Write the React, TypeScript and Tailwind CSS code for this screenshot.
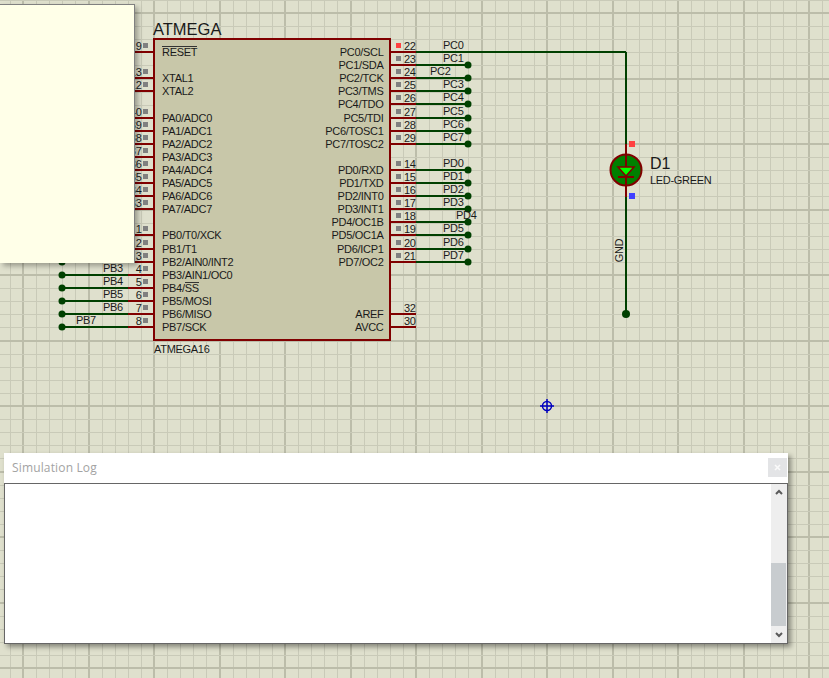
import React from 'react';

const WIDTH = 829;
const HEIGHT = 678;
const RED = '#800000';
const WIRE = '#004000';
const INK = '#1a1a1a';

const rowY = (n: number) => Math.round(52 + 13.1 * n);

// grid on the canvas: a minor line every 13.1px, a major one every fifth
const gridLines = (offset: number, max: number) => {
  const lines: { p: number; major: boolean }[] = [];
  for (let i = 0; ; i++) {
    const p = offset + 13.1 * i;
    if (p > max) break;
    lines.push({ p: Math.round(p), major: i % 5 === 0 });
  }
  return lines;
};

const leftPins = [
  { row: 0, name: 'RESET', num: '9' },
  { row: 2, name: 'XTAL1', num: '13' },
  { row: 3, name: 'XTAL2', num: '12' },
  { row: 5, name: 'PA0/ADC0', num: '40' },
  { row: 6, name: 'PA1/ADC1', num: '39' },
  { row: 7, name: 'PA2/ADC2', num: '38' },
  { row: 8, name: 'PA3/ADC3', num: '37' },
  { row: 9, name: 'PA4/ADC4', num: '36' },
  { row: 10, name: 'PA5/ADC5', num: '35' },
  { row: 11, name: 'PA6/ADC6', num: '34' },
  { row: 12, name: 'PA7/ADC7', num: '33' },
  { row: 14, name: 'PB0/T0/XCK', num: '1' },
  { row: 15, name: 'PB1/T1', num: '2' },
  { row: 16, name: 'PB2/AIN0/INT2', num: '3', wire: '' },
  { row: 17, name: 'PB3/AIN1/OC0', num: '4', wire: 'PB3', lx: 103 },
  { row: 18, name: 'PB4/SS', num: '5', wire: 'PB4', lx: 103 },
  { row: 19, name: 'PB5/MOSI', num: '6', wire: 'PB5', lx: 103 },
  { row: 20, name: 'PB6/MISO', num: '7', wire: 'PB6', lx: 103 },
  { row: 21, name: 'PB7/SCK', num: '8', wire: 'PB7', lx: 76 },
];

const rightPins = [
  { row: 0, name: 'PC0/SCL', num: '22', wire: 'PC0', lx: 443 },
  { row: 1, name: 'PC1/SDA', num: '23', wire: 'PC1', lx: 443 },
  { row: 2, name: 'PC2/TCK', num: '24', wire: 'PC2', lx: 430 },
  { row: 3, name: 'PC3/TMS', num: '25', wire: 'PC3', lx: 443 },
  { row: 4, name: 'PC4/TDO', num: '26', wire: 'PC4', lx: 443 },
  { row: 5, name: 'PC5/TDI', num: '27', wire: 'PC5', lx: 443 },
  { row: 6, name: 'PC6/TOSC1', num: '28', wire: 'PC6', lx: 443 },
  { row: 7, name: 'PC7/TOSC2', num: '29', wire: 'PC7', lx: 443 },
  { row: 9, name: 'PD0/RXD', num: '14', wire: 'PD0', lx: 443 },
  { row: 10, name: 'PD1/TXD', num: '15', wire: 'PD1', lx: 443 },
  { row: 11, name: 'PD2/INT0', num: '16', wire: 'PD2', lx: 443 },
  { row: 12, name: 'PD3/INT1', num: '17', wire: 'PD3', lx: 443 },
  { row: 13, name: 'PD4/OC1B', num: '18', wire: 'PD4', lx: 456 },
  { row: 14, name: 'PD5/OC1A', num: '19', wire: 'PD5', lx: 443 },
  { row: 15, name: 'PD6/ICP1', num: '20', wire: 'PD6', lx: 443 },
  { row: 16, name: 'PD7/OC2', num: '21', wire: 'PD7', lx: 443 },
  { row: 20, name: 'AREF', num: '32' },
  { row: 21, name: 'AVCC', num: '30' },
];

const Schematic: React.FC = () => (
  <svg width={WIDTH} height={HEIGHT} className="block" fontSize="11" letterSpacing="-0.3" fill={INK}>
    <g shapeRendering="crispEdges">
      {gridLines(23 - 65.5, WIDTH).map((l) => (
        <line key={l.p} x1={l.p} x2={l.p} y1={0} y2={HEIGHT} stroke={l.major ? '#bcbdaa' : '#c9cab8'} strokeWidth={l.major ? 2 : 1} />
      ))}
      {gridLines(13 - 65.5, HEIGHT).map((l) => (
        <line key={l.p} x1={0} x2={WIDTH} y1={l.p} y2={l.p} stroke={l.major ? '#bcbdaa' : '#c9cab8'} strokeWidth={l.major ? 2 : 1} />
      ))}
    </g>

    {/* chip body */}
    <rect x={154} y={39} width={236} height={301} fill="#c8c7a9" stroke={RED} strokeWidth={2} shapeRendering="crispEdges" />
    <text x={153} y={35} fontSize="16.5" letterSpacing="0">ATMEGA</text>
    <text x={154} y={353}>ATMEGA16</text>

    {leftPins.map((p) => {
      const y = rowY(p.row);
      return (
        <g key={p.name}>
          {p.wire !== undefined && (
            <g>
              <line x1={62} x2={128} y1={y} y2={y} stroke={WIRE} strokeWidth={2} shapeRendering="crispEdges" />
              <circle cx={62} cy={y} r={3.5} fill={WIRE} />
            </g>
          )}
          <line x1={128} x2={154} y1={y} y2={y} stroke={RED} strokeWidth={2} shapeRendering="crispEdges" />
          <rect x={143} y={y - 9} width={5} height={5} fill="#808080" />
          <text x={141.5} y={y - 2.5} textAnchor="end">{p.num}</text>
          {p.wire && <text x={p.lx} y={y - 3}>{p.wire}</text>}
          <text x={162} y={y + 4}>{p.name}</text>
        </g>
      );
    })}
    <line x1={162} x2={197} y1={46} y2={46} stroke="#333" shapeRendering="crispEdges" />
    <line x1={185} x2={199} y1={282} y2={282} stroke="#333" shapeRendering="crispEdges" />

    {rightPins.map((p) => {
      const y = rowY(p.row);
      return (
        <g key={p.name}>
          {p.wire && (
            <g>
              <line x1={416} x2={p.row === 0 ? 626 : 468} y1={y} y2={y} stroke={WIRE} strokeWidth={2} shapeRendering="crispEdges" />
              {p.row !== 0 && <circle cx={468} cy={y} r={3.5} fill={WIRE} />}
              <text x={p.lx} y={y - 3}>{p.wire}</text>
            </g>
          )}
          <line x1={390} x2={416} y1={y} y2={y} stroke={RED} strokeWidth={2} shapeRendering="crispEdges" />
          {p.wire && <rect x={396} y={y - 9} width={5} height={5} fill={p.row === 0 ? '#ff4040' : '#808080'} />}
          <text x={404} y={y - 2.5}>{p.num}</text>
          <text x={383.5} y={y + 4} textAnchor="end">{p.name}</text>
        </g>
      );
    })}

    {/* LED */}
    <line x1={626} x2={626} y1={52} y2={314} stroke={WIRE} strokeWidth={2} shapeRendering="crispEdges" />
    <circle cx={626} cy={314} r={4} fill={WIRE} />
    <line x1={626} x2={626} y1={144} y2={197} stroke={RED} strokeWidth={2} shapeRendering="crispEdges" />
    <circle cx={626} cy={170} r={15.5} fill="#008000" stroke={RED} strokeWidth={2} />
    <polygon points="618,167 634,167 626,176" fill="#00ff00" stroke={RED} strokeWidth={1.5} />
    <line x1={618} x2={634} y1={177} y2={177} stroke={RED} strokeWidth={2} shapeRendering="crispEdges" />
    <line x1={626} x2={626} y1={155} y2={167} stroke={RED} strokeWidth={2} shapeRendering="crispEdges" />
    <line x1={626} x2={626} y1={177} y2={185} stroke={RED} strokeWidth={2} shapeRendering="crispEdges" />
    <rect x={629} y={141} width={6} height={6} fill="#ff4040" />
    <rect x={629} y={193} width={6} height={6} fill="#4040ff" />
    <text x={650} y={169} fontSize="16" letterSpacing="0">D1</text>
    <text x={650} y={184}>LED-GREEN</text>
    <text x={623} y={250.5} textAnchor="middle" transform="rotate(-90 623 250.5)">GND</text>

    {/* origin marker */}
    <g stroke="#0000c0" strokeWidth={1.5} fill="none">
      <circle cx={547} cy={406} r={4.5} />
      <line x1={540} x2={554} y1={406} y2={406} />
      <line x1={547} x2={547} y1={399} y2={413} />
    </g>
  </svg>
);

const SimulationLog: React.FC = () => (
  <div className="absolute left-[4px] top-[453px] flex h-[191px] w-[784px] flex-col bg-white shadow-[3px_3px_5px_rgba(0,0,0,0.4)]">
    <div className="flex h-[30px] items-center justify-between pb-[1px] pl-[8px] pr-[1px]">
      <span className="font-['Open_Sans',sans-serif] text-[12px] leading-none tracking-[0.15px] text-[#a3a3a3]">Simulation Log</span>
      <button className="flex h-[19px] w-[19px] items-center justify-center bg-[#e3e4e6]">
        <svg width="7" height="7" viewBox="0 0 7 7" stroke="#fafafa" strokeWidth="1.6">
          <path d="M1 1l5 5M6 1L1 6" />
        </svg>
      </button>
    </div>
    <div className="flex min-h-0 flex-1 justify-end border border-[#666666]">
      <div className="flex w-[16px] flex-col bg-[#eeeeee]">
        <div className="flex h-[16px] items-center justify-center">
          <svg width="8" height="6" viewBox="0 0 8 6" fill="none" stroke="#5a5a5a" strokeWidth="2">
            <path d="M1 5l3-3 3 3" />
          </svg>
        </div>
        <div className="mt-[63px] mr-[1px] h-[63px] bg-[#c8cccf]" />
        <div className="flex flex-1 items-center justify-center">
          <svg width="8" height="6" viewBox="0 0 8 6" fill="none" stroke="#5a5a5a" strokeWidth="2">
            <path d="M1 1l3 3 3-3" />
          </svg>
        </div>
      </div>
    </div>
  </div>
);

const App: React.FC = () => (
  <div className="relative h-[678px] w-[829px] overflow-hidden bg-[#dfe0cd] font-['Liberation_Sans',Arial,sans-serif]">
    <Schematic />
    {/* note window running off the left edge */}
    <div className="absolute left-0 top-[4px] h-[259px] w-[135px] border-t border-r border-[#808080] bg-[#ffffe8] shadow-[3px_3px_5px_rgba(0,0,0,0.3)]" />
    <SimulationLog />
  </div>
);

export default App;
